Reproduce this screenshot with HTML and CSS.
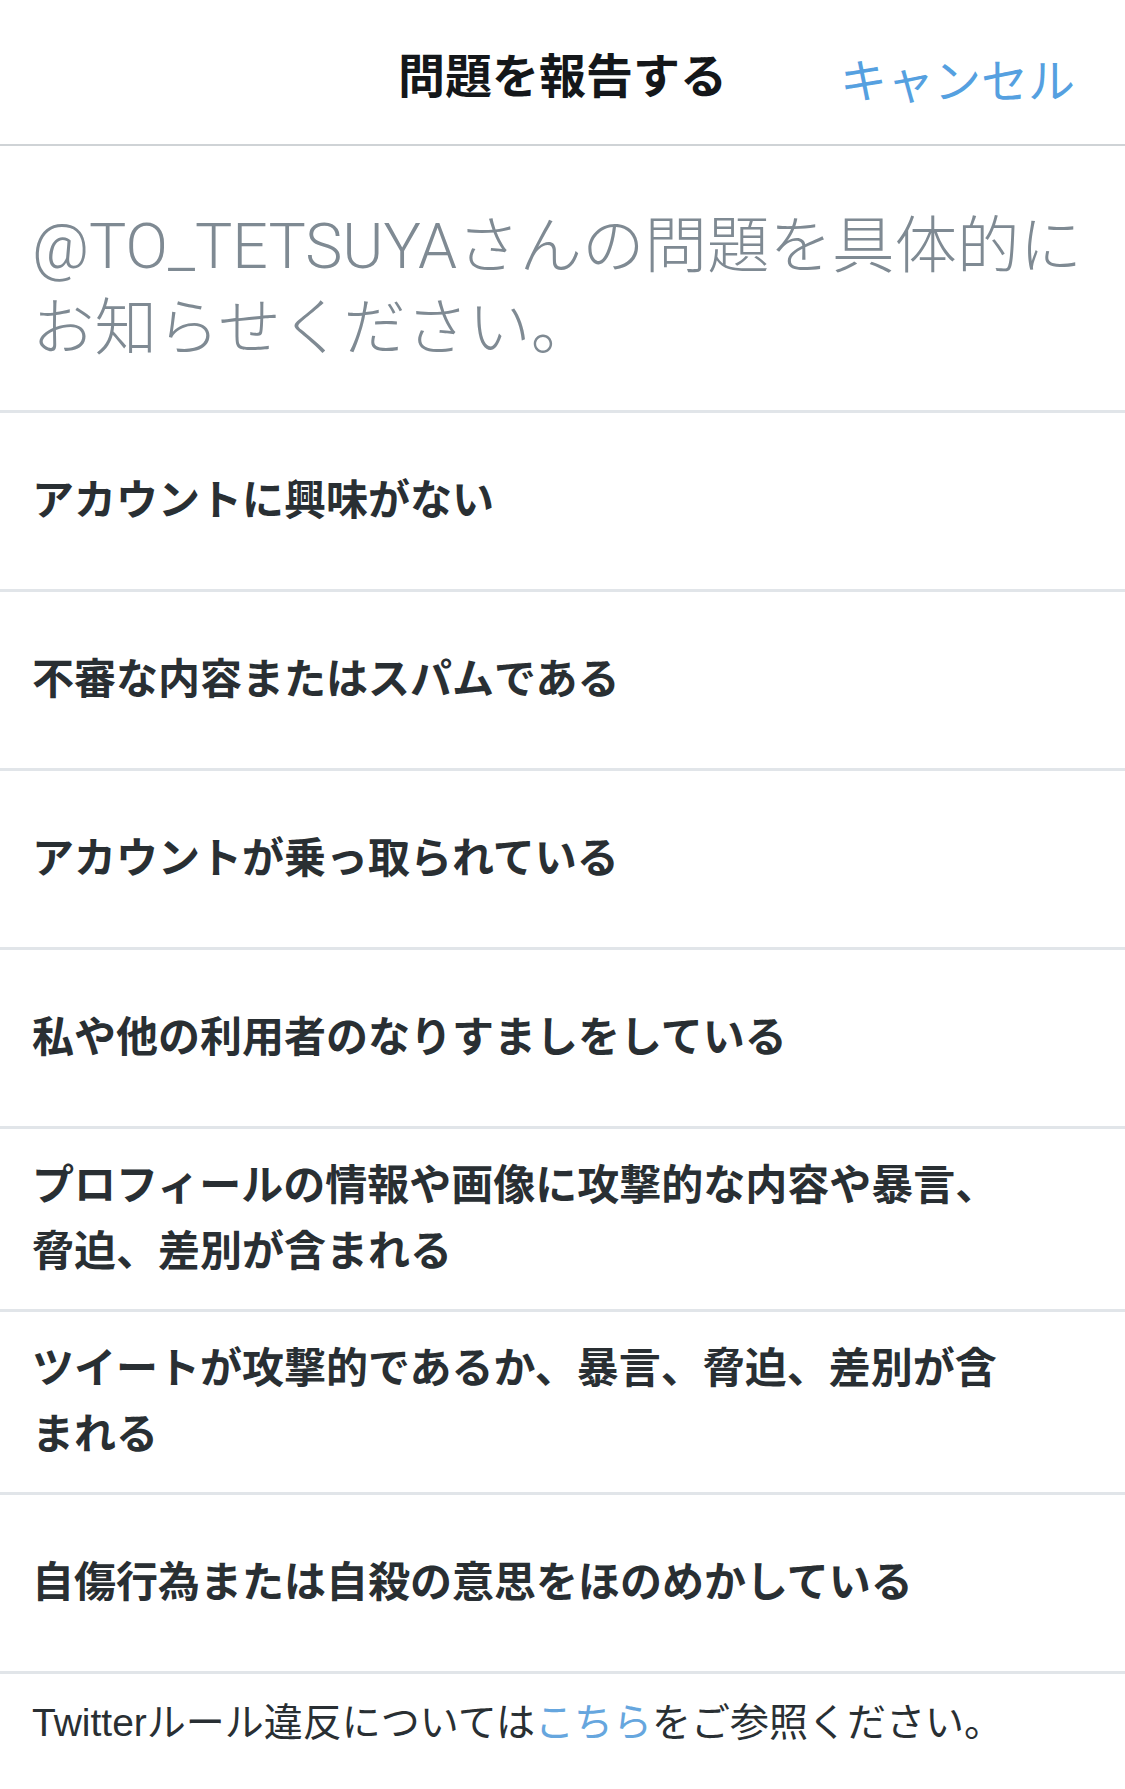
FILE: index.html
```html
<!DOCTYPE html>
<html>
<head>
    <title>問題を報告する</title>
    <link rel="stylesheet" href="styles.css">
</head>
<body>

<header class="report-header">
    <h1 class="report-title">問題を報告する</h1>
    <a href="#" class="cancel-link">キャンセル</a>
</header>

<div class="report-prompt">
    @TO_TETSUYAさんの問題を具体的にお知らせください。
</div>

<ul class="report-options">
    <li class="report-option">アカウントに興味がない</li>
    <li class="report-option">不審な内容またはスパムである</li>
    <li class="report-option">アカウントが乗っ取られている</li>
    <li class="report-option">私や他の利用者のなりすましをしている</li>
    <li class="report-option">プロフィールの情報や画像に攻撃的な内容や暴言、脅迫、差別が含まれる</li>
    <li class="report-option">ツイートが攻撃的であるか、暴言、脅迫、差別が含まれる</li>
    <li class="report-option">自傷行為または自殺の意思をほのめかしている</li>
</ul>

<p class="report-footer">
    Twitterルール違反については<a href="#" class="rules-link">こちら</a>をご参照ください。
</p>

</body>
</html>
```

FILE: styles.css
```css
* {
    box-sizing: border-box;
    margin: 0;
    padding: 0;
}
body {
    font-family: 'Liberation Sans', 'Noto Sans CJK JP', sans-serif;
    background-color: #FFFFFF;
    color: #292f33;
}
.report-header {
    display: flex;
    align-items: center;
    justify-content: center;
    position: relative;
    height: 146px;
    border-bottom: 2px solid #cfd3d6;
}
.report-title {
    font-size: 47px;
    font-weight: 700;
    color: #14171a;
}
.cancel-link {
    position: absolute;
    right: 50px;
    top: 43px;
    font-size: 47px;
    color: #55a0e0;
    text-decoration: none;
}
.report-prompt {
    padding: 60px 34px 40px 32px;
    font-family: 'Roboto', 'Noto Sans CJK JP', sans-serif;
    font-size: 62.5px;
    font-weight: 300;
    line-height: 82px;
    color: #7f8a93;
    border-bottom: 3px solid #e1e5e9;
}
.report-options {
    list-style: none;
}
.report-option {
    display: flex;
    align-items: center;
    min-height: 179px;
    padding: 24px 113px 24px 32px;
    font-size: 42px;
    font-weight: 700;
    line-height: 66px;
    border-bottom: 3px solid #e1e5e9;
}
.report-footer {
    padding: 20px 32px;
    font-size: 39px;
    line-height: 57px;
    color: #292f33;
}
.rules-link {
    color: #66a6de;
    text-decoration: none;
}
```
